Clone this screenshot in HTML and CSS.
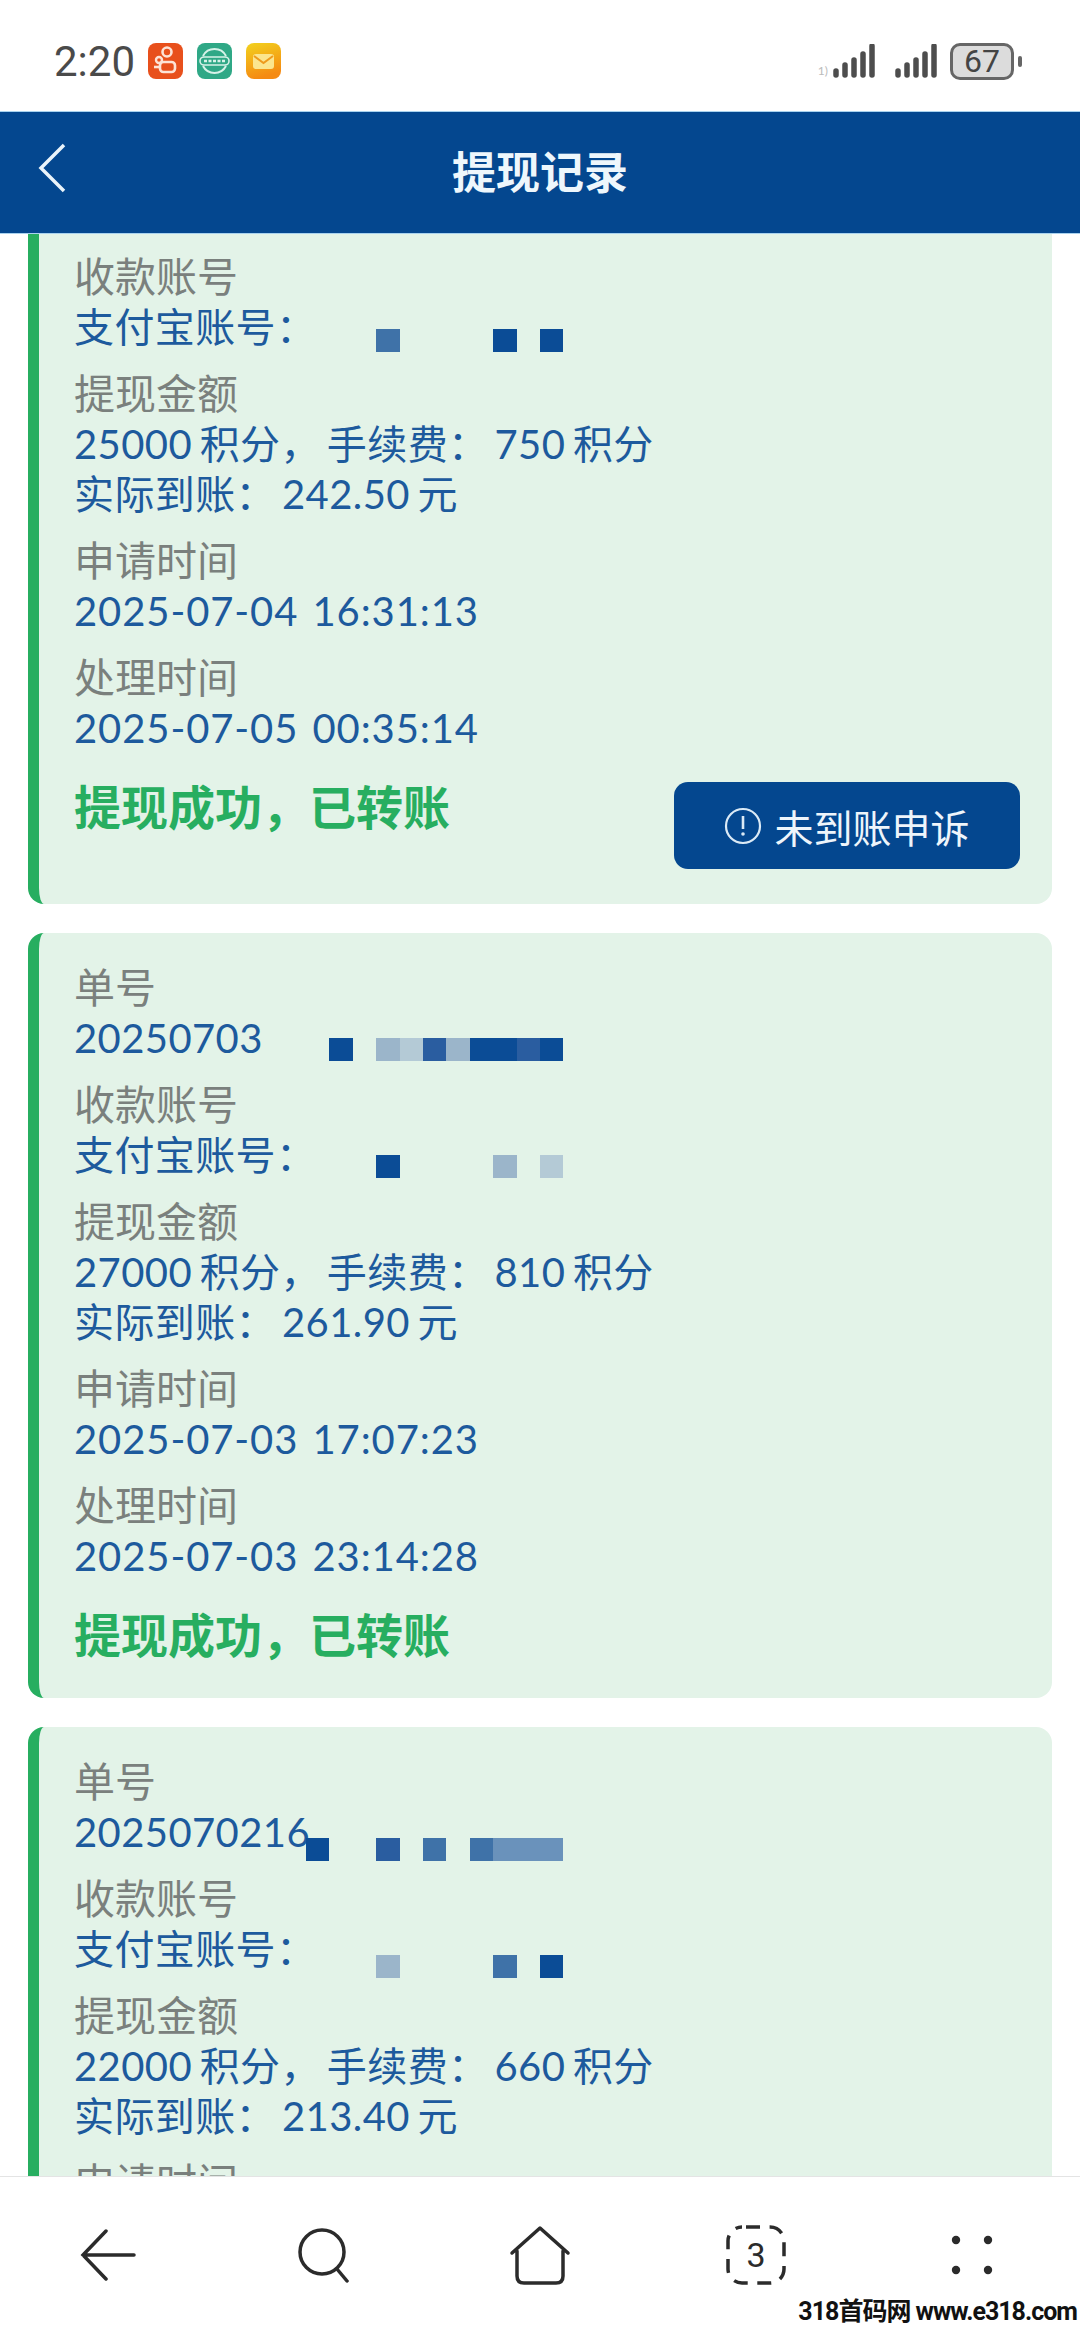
FILE: index.html
```html
<!DOCTYPE html>
<html lang="zh-CN">
<head>
    <meta charset="UTF-8">
    <meta name="viewport" content="width=device-width, initial-scale=1.0">
    <title>提现记录</title>
    <link rel="stylesheet" href="styles.css">
</head>
<body>
<div class="page">
    <header class="status-bar">
        <div class="status-left">
            <span class="time">2:20</span>
            <svg class="app-icon" viewBox="0 0 35 36">
                <rect width="35" height="36" rx="8" fill="#e8501c"/>
                <circle cx="19" cy="9" r="4.500" fill="none" stroke="#fde3d6" stroke-width="2.600"/>
                <circle cx="11" cy="17" r="3" fill="none" stroke="#fde3d6" stroke-width="2.400"/>
                <rect x="12" y="19" width="15" height="10" rx="3.500" fill="none" stroke="#fde3d6" stroke-width="2.600"/>
                <path d="M6 24h5" stroke="#fde3d6" stroke-width="2.600"/>
            </svg>
            <svg class="app-icon" viewBox="0 0 35 36">
                <rect width="35" height="36" rx="8" fill="#2fa886"/>
                <path d="M6 13a13 13 0 0 1 23 0M6 23a13 13 0 0 0 23 0" fill="none" stroke="#d6f2e8" stroke-width="2"/>
                <rect x="3" y="14" width="29" height="8" rx="4" fill="none" stroke="#d6f2e8" stroke-width="1.600"/>
                <path d="M7 18h21" stroke="#d6f2e8" stroke-width="2.400" stroke-dasharray="3 1.500"/>
            </svg>
            <svg class="app-icon" viewBox="0 0 35 36">
                <defs>
                    <linearGradient id="mailBg" x1="0" y1="0" x2="0.3" y2="1">
                        <stop offset="0" stop-color="#f2d21e"/>
                        <stop offset="1" stop-color="#f58a12"/>
                    </linearGradient>
                </defs>
                <rect width="35" height="36" rx="8" fill="url(#mailBg)"/>
                <rect x="7" y="11" width="21" height="15" rx="3" fill="#fbe58e"/>
                <path d="M8 13l9.500 7 9.500-7" fill="none" stroke="#ee9a1c" stroke-width="2"/>
            </svg>
        </div>
        <div class="status-right">
            <span class="sim-tag">1)</span>
            <svg class="signal" viewBox="0 0 42 34">
                <path d="M3 27v4M12 21v10M21 16v15M30 10v21M39 2v29" stroke="#4d4d4d" stroke-width="5.500" stroke-linecap="round"/>
            </svg>
            <svg class="signal signal-two" viewBox="0 0 42 34">
                <path d="M3 27v4M12 21v10M21 16v15M30 10v21M39 2v29" stroke="#4d4d4d" stroke-width="5.500" stroke-linecap="round"/>
            </svg>
            <div class="battery">67</div>
            <div class="battery-tip"></div>
        </div>
    </header>

    <nav class="navbar">
        <svg class="nav-back" viewBox="0 0 30 50">
            <path d="M27 2L4 25l23 23" fill="none" stroke="#eaf4fb" stroke-width="3.500"/>
        </svg>
        <h1>提现记录</h1>
    </nav>

    <main class="list">
        <section class="card card-first">
            <div class="group">
                <div class="label">收款账号</div>
                <div class="value">支付宝账号：
                    <div class="mosaic">
                        <i></i><i></i><i></i><i class="s2"></i><i></i><i></i><i></i><i></i><i class="s4"></i><i></i><i class="s4"></i>
                    </div>
                </div>
            </div>
            <div class="group">
                <div class="label">提现金额</div>
                <div class="value">25000 积分<span class="pn">，</span>手续费<span class="pn">：</span>750 积分</div>
                <div class="value">实际到账<span class="pn">：</span>242.50 元</div>
            </div>
            <div class="group">
                <div class="label">申请时间</div>
                <div class="value date">2025-07-04 16:31:13</div>
            </div>
            <div class="group">
                <div class="label">处理时间</div>
                <div class="value date">2025-07-05 00:35:14</div>
            </div>
            <div class="result">
                <span class="success">提现成功，已转账</span>
                <button class="appeal">
                    <svg class="appeal-icon" viewBox="0 0 38 38">
                        <circle cx="19" cy="19" r="17" fill="none" stroke="#dbeaf6" stroke-width="2.200"/>
                        <path d="M19 9v13" stroke="#dbeaf6" stroke-width="2.600"/>
                        <circle cx="19" cy="27" r="1.800" fill="#dbeaf6"/>
                    </svg>
                    未到账申诉
                </button>
            </div>
        </section>

        <section class="card">
            <div class="group">
                <div class="label">单号</div>
                <div class="value">20250703
                    <div class="mosaic">
                        <i></i><i class="s4"></i><i></i><i class="s1"></i><i class="s0"></i><i class="s3"></i><i class="s1"></i><i class="s4"></i><i class="s4"></i><i class="s3"></i><i class="s4"></i>
                    </div>
                </div>
            </div>
            <div class="group">
                <div class="label">收款账号</div>
                <div class="value">支付宝账号：
                    <div class="mosaic">
                        <i></i><i></i><i></i><i class="s4"></i><i></i><i></i><i></i><i></i><i class="s1"></i><i></i><i class="s0"></i>
                    </div>
                </div>
            </div>
            <div class="group">
                <div class="label">提现金额</div>
                <div class="value">27000 积分<span class="pn">，</span>手续费<span class="pn">：</span>810 积分</div>
                <div class="value">实际到账<span class="pn">：</span>261.90 元</div>
            </div>
            <div class="group">
                <div class="label">申请时间</div>
                <div class="value date">2025-07-03 17:07:23</div>
            </div>
            <div class="group">
                <div class="label">处理时间</div>
                <div class="value date">2025-07-03 23:14:28</div>
            </div>
            <div class="result">
                <span class="success">提现成功，已转账</span>
            </div>
        </section>

        <section class="card card-last">
            <div class="group">
                <div class="label">单号</div>
                <div class="value">2025070216
                    <div class="mosaic">
                        <i class="s4"></i><i></i><i></i><i class="s3"></i><i></i><i class="s2"></i><i></i><i class="s2"></i><i class="m"></i><i class="m"></i><i class="m"></i>
                    </div>
                </div>
            </div>
            <div class="group">
                <div class="label">收款账号</div>
                <div class="value">支付宝账号：
                    <div class="mosaic">
                        <i></i><i></i><i></i><i class="s1"></i><i></i><i></i><i></i><i></i><i class="s2"></i><i></i><i class="s4"></i>
                    </div>
                </div>
            </div>
            <div class="group">
                <div class="label">提现金额</div>
                <div class="value">22000 积分<span class="pn">，</span>手续费<span class="pn">：</span>660 积分</div>
                <div class="value">实际到账<span class="pn">：</span>213.40 元</div>
            </div>
            <div class="group">
                <div class="label">申请时间</div>
            </div>
        </section>
    </main>

    <footer class="tabbar">
        <div class="tab">
            <svg class="tab-icon" width="56" height="52" viewBox="0 0 56 52">
                <path d="M26 2L3 26l23 24M3 26h51" fill="none" stroke="#2b2b2b" stroke-width="3.500" stroke-linecap="round"/>
            </svg>
        </div>
        <div class="tab">
            <svg class="tab-icon" width="54" height="56" viewBox="0 0 54 56">
                <circle cx="25" cy="25" r="22" fill="none" stroke="#2b2b2b" stroke-width="3.500"/>
                <path d="M40 42l10 12" stroke="#2b2b2b" stroke-width="3.500" stroke-linecap="round"/>
            </svg>
        </div>
        <div class="tab">
            <svg class="tab-icon" width="62" height="60" viewBox="0 0 62 60">
                <path d="M3 28L31 3l28 25M8 26v25q0 7 7 7h32q7 0 7-7V26" fill="none" stroke="#2b2b2b" stroke-width="3.500" stroke-linecap="round" stroke-linejoin="round"/>
            </svg>
        </div>
        <div class="tab tab-count">
            <svg class="tab-icon" width="60" height="60" viewBox="0 0 60 60">
                <rect x="2" y="2" width="56" height="56" rx="14" fill="none" stroke="#2b2b2b" stroke-width="3.500" stroke-dasharray="14 9.600" stroke-dashoffset="-4"/>
            </svg>
            <span class="tab-num">3</span>
        </div>
        <div class="tab">
            <svg class="tab-icon" width="42" height="40" viewBox="0 0 42 40">
                <circle cx="5" cy="5" r="4.200" fill="#2b2b2b"/>
                <circle cx="37" cy="5" r="4.200" fill="#2b2b2b"/>
                <circle cx="5" cy="35" r="4.200" fill="#2b2b2b"/>
                <circle cx="37" cy="35" r="4.200" fill="#2b2b2b"/>
            </svg>
        </div>
    </footer>

    <div class="watermark">318首码网 www.e318.com</div>
</div>
</body>
</html>
```

FILE: styles.css
```css
* {
    margin: 0;
    padding: 0;
    box-sizing: border-box;
    font-family: Lato, "Noto Sans CJK SC", sans-serif;
}
body {
    background-color: #fff;
}
.page {
    position: relative;
    display: flex;
    flex-direction: column;
    width: 1080px;
    height: 2332px;
    overflow: hidden;
}
.status-bar {
    display: flex;
    justify-content: space-between;
    align-items: center;
    height: 111px;
    padding: 11px 58px 0 54px;
    flex-shrink: 0;
}
.status-left {
    display: flex;
    align-items: center;
}
.time {
    font-family: Roboto, sans-serif;
    font-size: 42px;
    color: #4a4a4a;
    margin-right: 13px;
}
.app-icon {
    width: 35px;
    height: 36px;
    margin-right: 14px;
}
.status-right {
    display: flex;
    align-items: center;
}
.sim-tag {
    font-size: 12px;
    color: #bbb;
    margin: 18px 5px 0 0;
}
.signal {
    width: 42px;
    height: 34px;
}
.signal-two {
    margin-left: 20px;
}
.battery {
    width: 64px;
    height: 37px;
    margin-left: 13px;
    border: 3px solid #666;
    border-radius: 10px;
    background-color: #dcdcdc;
    color: #444;
    font-family: Roboto, sans-serif;
    font-size: 32px;
    line-height: 31px;
    text-align: center;
}
.battery-tip {
    width: 4px;
    height: 11px;
    margin-left: 4px;
    border-radius: 2px;
    background-color: #666;
}
.navbar {
    position: relative;
    display: flex;
    justify-content: center;
    align-items: center;
    height: 123px;
    padding-bottom: 6px;
    flex-shrink: 0;
    background-color: #04478f;
    border-top: 1px solid #a9d2ee;
    border-bottom: 1px solid #a9d2ee;
}
.navbar h1 {
    font-size: 44px;
    font-weight: 700;
    color: #eef7fc;
}
.nav-back {
    position: absolute;
    left: 37px;
    top: 31px;
    width: 30px;
    height: 50px;
}
.list {
    flex: 1;
    min-height: 0;
    overflow: hidden;
    display: flex;
    flex-direction: column;
    gap: 29px;
}
.card {
    flex-shrink: 0;
    margin: 0 28px;
    padding: 30px 32px 38px 35px;
    display: flex;
    flex-direction: column;
    gap: 17px;
    background-color: #e3f3e8;
    border-left: 11px solid #27ae60;
    border-radius: 16px;
}
.card-first {
    padding-top: 18px;
    border-top-left-radius: 0;
    border-top-right-radius: 0;
}
.label {
    font-size: 41px;
    line-height: 50px;
    color: #7a807d;
}
.value {
    position: relative;
    font-size: 40px;
    line-height: 50px;
    letter-spacing: 0.4px;
    word-spacing: -3px;
    color: #1d5a9d;
}
.date {
    letter-spacing: 0.9px;
    word-spacing: 3px;
}
.pn {
    margin-right: 6px;
}
.mosaic {
    position: absolute;
    left: 232px;
    top: 25px;
    display: grid;
    grid-template-columns: repeat(11, 23.4px);
    height: 23px;
}
.card-first .mosaic {
    top: 27px;
}
.card-last .mosaic {
    top: 31px;
}
.s0 { background-color: #b4cad6; }
.s1 { background-color: #9bb5ca; }
.s2 { background-color: #3f72a8; }
.s3 { background-color: #2a5da0; }
.s4 { background-color: #0b4c96; }
.m { background-color: #6a92bb; }
.result {
    display: flex;
    justify-content: space-between;
    align-items: flex-start;
    margin-top: 12px;
}
.success {
    font-size: 47px;
    font-weight: 700;
    line-height: 50px;
    color: #27ae60;
}
.appeal {
    display: flex;
    justify-content: center;
    align-items: center;
    gap: 12px;
    width: 346px;
    height: 87px;
    margin-bottom: -3px;
    border: none;
    border-radius: 14px;
    background-color: #04478f;
    color: #eef5fb;
    font-size: 39px;
}
.appeal-icon {
    width: 38px;
    height: 38px;
}
.tabbar {
    display: flex;
    align-items: center;
    height: 156px;
    flex-shrink: 0;
    background-color: #fff;
    border-top: 1px solid #e4e4e4;
}
.tab {
    flex: 1;
    display: flex;
    justify-content: center;
    align-items: center;
}
.tab-count {
    position: relative;
}
.tab-num {
    position: absolute;
    left: 0;
    right: 0;
    text-align: center;
    font-family: Roboto, sans-serif;
    font-size: 34px;
    color: #2b2b2b;
}
.watermark {
    position: absolute;
    right: 3px;
    bottom: 5px;
    font-family: Roboto, "Noto Sans CJK SC", sans-serif;
    font-size: 25px;
    font-weight: 700;
    letter-spacing: -1px;
    color: #111;
}
```
